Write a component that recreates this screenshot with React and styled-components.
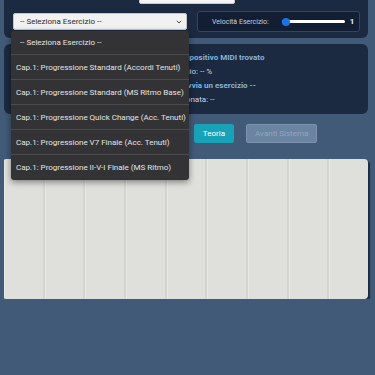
import React from "react";
import styled, { createGlobalStyle } from "styled-components";

const exercises = [
  "Cap.1: Progressione Standard (Accordi Tenuti)",
  "Cap.1: Progressione Standard (MS Ritmo Base)",
  "Cap.1: Progressione Quick Change (Acc. Tenuti)",
  "Cap.1: Progressione V7 Finale (Acc. Tenuti)",
  "Cap.1: Progressione II-V-I Finale (MS Ritmo)",
];

const GlobalStyle = createGlobalStyle`
  html, body {
    margin: 0;
    background: #415a78;
    font-family: Roboto, "Liberation Sans", sans-serif;
    overflow: hidden;
  }
`;

const Page = styled.div`
  margin-top: -22px;
  padding: 0 7px 0 4px;
  display: flex;
  flex-direction: column;
`;

const TopPanel = styled.div`
  background: #1b2a40;
  border-radius: 6px;
  padding: 6px 8px 6px 9px;
  display: flex;
  flex-direction: column;
  gap: 7px;
`;

const KeyRow = styled.div`
  display: flex;
  justify-content: center;
`;

const KeyInput = styled.div`
  width: 94px;
  height: 18px;
  background: #f5f5f5;
  border: 1px solid #c9c9c9;
  border-radius: 2px;
  margin-left: 1px;
`;

const ControlsRow = styled.div`
  display: grid;
  grid-template-columns: 174px minmax(0, 1fr);
  gap: 10px;
  align-items: center;
`;

const SelectWrap = styled.div`
  position: relative;
`;

const SelectBox = styled.div`
  height: 17px;
  box-sizing: border-box;
  background: #f1f1f1;
  border: 1px solid #c4c4c4;
  border-radius: 2px;
  display: flex;
  align-items: center;
  justify-content: space-between;
  padding: 0 4px 0 6px;
  font-size: 8px;
  color: #2a2a2a;
`;

const Menu = styled.ul`
  position: absolute;
  top: 18px;
  left: -2px;
  width: 178px;
  margin: 0;
  padding: 0;
  list-style: none;
  background: #333335;
  border-radius: 3px;
  box-shadow: 0 2px 6px rgba(0, 0, 0, 0.45);
  z-index: 10;
`;

const MenuItem = styled.li`
  height: ${(p) => (p.$first ? 24 : 25)}px;
  box-sizing: border-box;
  display: flex;
  align-items: center;
  padding-left: ${(p) => (p.$first ? 9 : 5)}px;
  border-bottom: ${(p) => (p.$last ? "none" : "1px solid #4b4b4d")};
  font-size: 8px;
  color: #e4e4e4;
  white-space: nowrap;
`;

const SpeedPanel = styled.div`
  height: 21px;
  box-sizing: border-box;
  background: #121e33;
  border: 1px solid #34465e;
  border-radius: 3px;
  display: flex;
  align-items: center;
  padding: 0 8px 0 14px;
  font-size: 7px;
  color: #c6cfdb;
  white-space: nowrap;
`;

const Range = styled.input`
  -webkit-appearance: none;
  appearance: none;
  flex: none;
  width: 63px;
  height: 8px;
  margin: 0 5px 0 13px;
  background: transparent;

  &::-webkit-slider-runnable-track {
    height: 3px;
    background: #ffffff;
    border-radius: 2px;
  }
  &::-webkit-slider-thumb {
    -webkit-appearance: none;
    width: 8px;
    height: 8px;
    margin-top: -2.5px;
    border-radius: 50%;
    background: #1a73e8;
  }
`;

const SpeedValue = styled.span`
  font-size: 8px;
  font-weight: 700;
  color: #e6ebf2;
`;

const InfoPanel = styled.div`
  margin-top: 6px;
  background: #1b2a40;
  border-radius: 6px;
  padding: 7px 12px;
  text-align: center;
`;

const InfoLine = styled.div`
  height: 14px;
  line-height: 14px;
  font-size: 8px;
  white-space: nowrap;
  font-weight: ${(p) => (p.$strong ? 700 : 400)};
  color: ${(p) => (p.$strong ? "#86b3de" : "#c9d5e4")};
`;

const ButtonRow = styled.div`
  margin-top: 10px;
  display: flex;
  justify-content: center;
  gap: 12px;
`;

const Button = styled.button`
  height: 19px;
  padding: 0 8px;
  border: 1px solid ${(p) => (p.disabled ? "#7d93ad" : p.$bg)};
  border-radius: 2px;
  background: ${(p) => (p.disabled ? "#6b84a1" : p.$bg)};
  color: ${(p) => (p.disabled ? "#93a5bb" : "#ffffff")};
  font-family: Roboto, "Liberation Sans", sans-serif;
  font-size: 8px;
`;

const Piano = styled.div`
  margin-top: 16px;
  height: 140px;
  display: flex;
  background: #dfdfdb;
  border-radius: 2px 4px 4px 2px;
  box-shadow: 2px 2px 1px rgba(20, 30, 45, 0.75);
  overflow: hidden;
`;

const Key = styled.div`
  flex: 1;
  border-right: 2px solid #d4d4ce;
  box-shadow: inset 1px 0 0 #e8e8e4;
  &:last-child {
    border-right: none;
  }
`;

const Chevron = () => (
  <svg width="6" height="4" viewBox="0 0 6 4">
    <path d="M0.8 0.8 L3 3 L5.2 0.8" fill="none" stroke="#333" strokeWidth="0.9" />
  </svg>
);

export default function App() {
  return (
    <>
      <GlobalStyle />
      <Page>
        <TopPanel>
          <KeyRow>
            <KeyInput />
          </KeyRow>
          <ControlsRow>
            <SelectWrap>
              <SelectBox>
                <span>-- Seleziona Esercizio --</span>
                <Chevron />
              </SelectBox>
              <Menu>
                <MenuItem $first>-- Seleziona Esercizio --</MenuItem>
                {exercises.map((ex, i) => (
                  <MenuItem key={ex} $last={i === exercises.length - 1}>
                    {ex}
                  </MenuItem>
                ))}
              </Menu>
            </SelectWrap>
            <SpeedPanel>
              <span>Velocità Esercizio:</span>
              <Range type="range" min="1" max="5" defaultValue="1" />
              <SpeedValue>1</SpeedValue>
            </SpeedPanel>
          </ControlsRow>
        </TopPanel>

        <InfoPanel>
          <InfoLine $strong>Stato MIDI: Nessun dispositivo MIDI trovato</InfoLine>
          <InfoLine>Punteggio: -- %</InfoLine>
          <InfoLine $strong>Stato Esercizio: -- Avvia un esercizio --</InfoLine>
          <InfoLine>Nota Suonata: --</InfoLine>
        </InfoPanel>

        <ButtonRow>
          <Button $bg="#28a745">Avvia Esercizio</Button>
          <Button $bg="#dc3545">Arresta</Button>
          <Button $bg="#17a2b8">Teoria</Button>
          <Button disabled>Avanti Sistema</Button>
        </ButtonRow>

        <Piano>
          {Array.from({ length: 9 }).map((_, i) => (
            <Key key={i} />
          ))}
        </Piano>
      </Page>
    </>
  );
}
